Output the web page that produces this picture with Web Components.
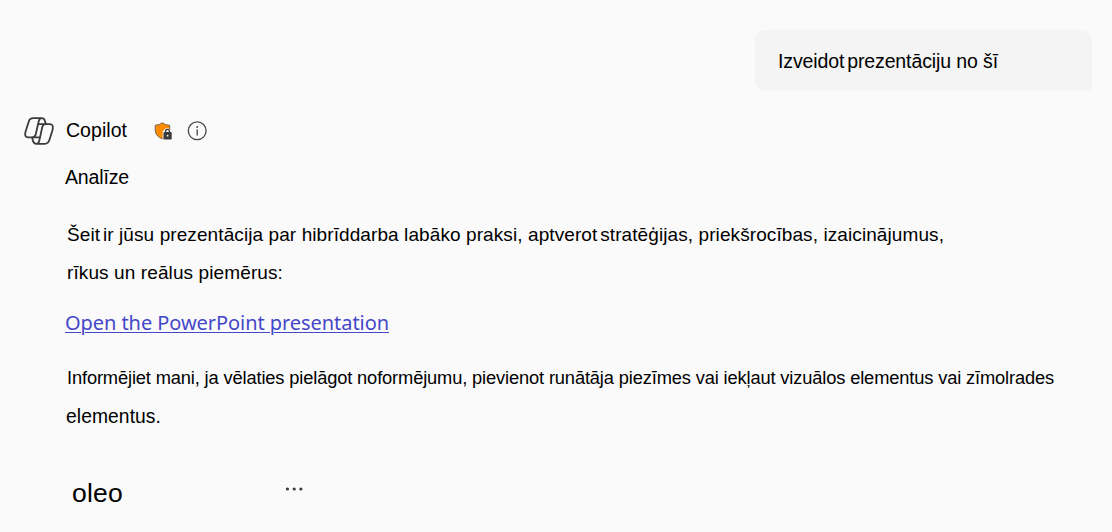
<!DOCTYPE html>
<html lang="lv"><head><meta charset="utf-8"><title>Copilot</title>
<style>html,body{margin:0;height:532px;background:#fafafa;overflow:hidden}</style></head>
<body><chat-page></chat-page>
<script>
class TextLine extends HTMLElement{
  constructor(){super();this.attachShadow({mode:'open'}).innerHTML=`<style>
:host{display:block;white-space:nowrap;font-family:"Liberation Sans",Arial,sans-serif;font-size:19px;line-height:38px;color:#000}
span{display:inline-block}</style><span><slot></slot></span>`;}
  connectedCallback(){
    const s=this.shadowRoot.querySelector('span'),w=+this.getAttribute('measure');
    if(w)s.style.letterSpacing=((w-s.getBoundingClientRect().width)/this.textContent.length)+'px';
  }
}
class UserMessage extends HTMLElement{
  constructor(){super();this.attachShadow({mode:'open'}).innerHTML=`<style>
:host{display:block;box-sizing:border-box;width:337px;height:61px;margin-left:auto;padding:12px 23px;background:#f4f4f4;border-radius:10px 10px 2px 10px}</style><slot></slot>`;}
}
class CopilotLogo extends HTMLElement{
  constructor(){super();this.attachShadow({mode:'open'}).innerHTML=`<style>:host,svg{display:block}</style>
<svg width="30" height="28" viewBox="0 0 30 28" fill="none" stroke="#3b3b3b" stroke-width="1.8" stroke-linejoin="round" stroke-linecap="round">
<path d="M17.5 1.2H9.2Q5.8 1.2 4.7 4.7L1.6 14.5Q0 20.3 4.2 20.3H8.5Q11 20.3 11.7 17.5L14.7 4.4Q15.4 1.2 17.5 1.2Q20.3 1.2 21 4L21.8 6.8"/>
<path d="M12.5 26.8H20.8Q24.2 26.8 25.3 23.3L28.4 13.5Q30 7.2 25.8 7.2H21.5Q19 7.2 18.3 10L15.3 23.6Q14.6 26.8 12.5 26.8Q9.7 26.8 9 24L8.2 20.7"/>
<path d="M14.3 7.2H21M9 20.3H15.8"/></svg>`;}
}
class ShieldIcon extends HTMLElement{
  constructor(){super();this.attachShadow({mode:'open'}).innerHTML=`<style>:host,svg{display:block}</style>
<svg width="18" height="18" viewBox="0 0 18 18">
<path d="M8.3 .7Q11.1 3.2 15.7 3.3V8Q15.7 14 8.3 16.9Q1.2 14 1.2 8V3.3Q5.5 3.2 8.3 .7Z" fill="#ff8c00" stroke="#6b5a45" stroke-width=".9"/>
<path d="M8.7 9H9.7Q10 6.2 13 6.2Q16 6.2 16.4 9H18V18H8.7Z" fill="#fafafa"/>
<rect x="9.5" y="10" width="8.2" height="7.6" rx="1.2" fill="#3b3b3b"/>
<path d="M11.6 10.5V9Q11.6 7.3 13.5 7.3T15.4 9V10.5" fill="none" stroke="#3b3b3b" stroke-width="1.3"/>
<circle cx="13.6" cy="13.7" r=".9" fill="#fafafa"/></svg>`;}
}
class InfoIcon extends HTMLElement{
  constructor(){super();this.attachShadow({mode:'open'}).innerHTML=`<style>:host,svg{display:block}</style>
<svg width="20" height="20" viewBox="0 0 20 20"><circle cx="10.2" cy="9.8" r="8.9" fill="none" stroke="#444" stroke-width="1.3"/><circle cx="10.2" cy="6" r=".95" fill="#444"/><path d="M10.2 8.8V14" stroke="#444" stroke-width="1.3" stroke-linecap="round"/></svg>`;}
}
class MoreButton extends HTMLElement{
  constructor(){super();this.attachShadow({mode:'open'}).innerHTML=`<style>:host,svg{display:block}</style>
<svg width="18" height="4" viewBox="0 0 18 4" fill="#3b3b3b"><circle cx="2.4" cy="2" r="1.6"/><circle cx="9.2" cy="2" r="1.6"/><circle cx="15.9" cy="2" r="1.6"/></svg>`;}
}
class ChatPage extends HTMLElement{
  constructor(){super();this.attachShadow({mode:'open'}).innerHTML=`<style>
:host{display:block;box-sizing:border-box;width:1112px;height:532px;padding:30px 20px 0 24px;background:#fafafa}
header{display:flex;align-items:center;height:38px;margin-top:21px}
header text-line{margin:0 0 2px 12px;width:88px;font-size:19.5px}
user-message text-line{font-size:19.5px}
info-icon{margin-left:15px}
main{padding-left:41px}
.status{margin:8px 0 20px;font-size:19.5px}
.answer{padding-left:2px}
.tight{word-spacing:-2.5px}
.link{margin-top:12px;font-family:"Noto Sans",sans-serif;font-size:20px;color:#4547c9}
a{color:inherit;text-decoration:underline;text-decoration-thickness:1px;text-underline-offset:2px}
.follow{padding-left:2px;margin-top:17px}
.follow text-line:first-child{font-size:18.3px}
.follow text-line:last-child{margin-left:-1px;font-size:19.3px;line-height:40px}
footer{display:flex;align-items:center;padding-left:7px;margin-top:37px}
footer text-line{font-size:26.5px;width:213px}
more-button{margin-bottom:8px}
</style>
<user-message><text-line measure="220"><span class="tight">Izveidot </span>prezentāciju no šī</text-line></user-message>
<header><copilot-logo></copilot-logo><text-line measure="61">Copilot</text-line><shield-icon></shield-icon><info-icon></info-icon></header>
<main>
<text-line class="status" measure="64">Analīze</text-line>
<div class="answer"><text-line measure="877"><span class="tight">Šeit </span>ir jūsu prezentācija par hibrīddarba labāko praksi, <span class="tight">aptverot </span>stratēģijas, priekšrocības, izaicinājumus,</text-line>
<text-line measure="216">rīkus un reālus piemērus:</text-line></div>
<text-line class="link" measure="324"><a>Open the PowerPoint presentation</a></text-line>
<div class="follow"><text-line measure="987">Informējiet mani, ja vēlaties pielāgot noformējumu, pievienot runātāja piezīmes vai iekļaut vizuālos elementus vai zīmolrades</text-line>
<text-line measure="95">elementus.</text-line></div>
<footer><text-line measure="51">oleo</text-line><more-button></more-button></footer>
</main>`;}
}
for(const [n,c] of [['text-line',TextLine],['user-message',UserMessage],['copilot-logo',CopilotLogo],['shield-icon',ShieldIcon],['info-icon',InfoIcon],['more-button',MoreButton],['chat-page',ChatPage]])customElements.define(n,c);
</script></body></html>
